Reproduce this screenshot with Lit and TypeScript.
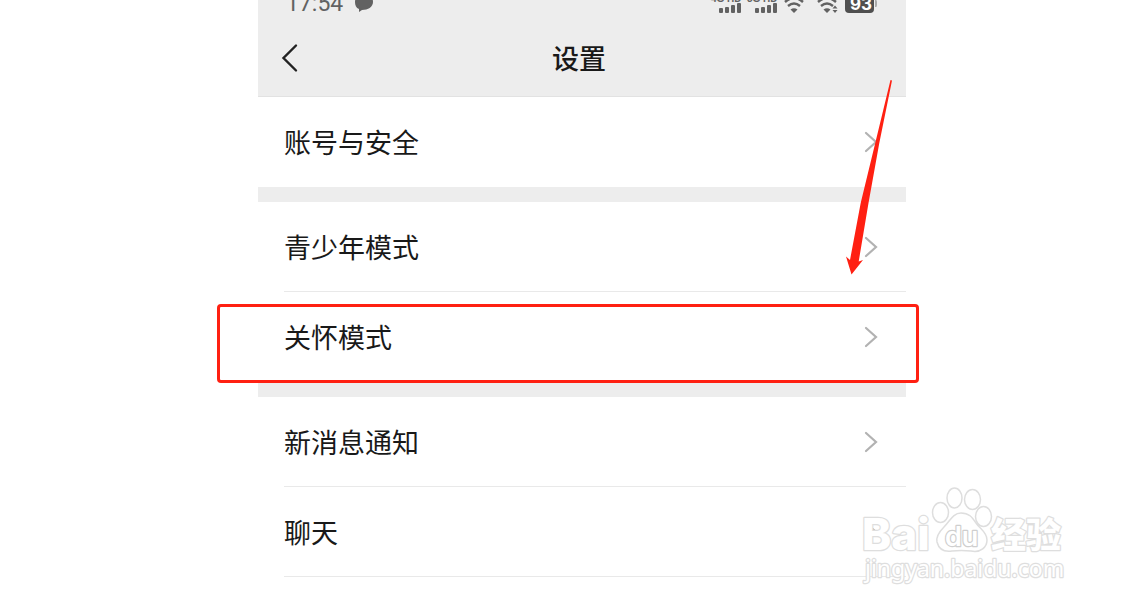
import { LitElement, html, css, svg, nothing } from "lit";
import { customElement, property } from "lit/decorators.js";

@customElement("status-bar")
class StatusBar extends LitElement {
  static styles = css`
    :host {
      display: flex;
      justify-content: space-between;
      height: 20px;
      padding: 0 28px;
      overflow: hidden;
      color: #626262;
    }
    .left {
      display: flex;
      gap: 12px;
    }
    .time {
      font: 23px/24px Roboto, "Noto Sans", sans-serif;
      margin-top: -8px;
    }
    svg {
      display: block;
      fill: currentColor;
    }
    .net {
      font: 700 10px "Liberation Sans", sans-serif;
    }
    .level {
      font: 700 17px Inter, sans-serif;
      fill: #fff;
    }
    .wave {
      fill: none;
      stroke: currentColor;
      stroke-width: 2.4;
    }
  `;

  private bars(x: number) {
    return svg`
      <rect x=${x} y="8" width="4" height="5" rx="1" />
      <rect x=${x + 6} y="7" width="4" height="6" rx="1" />
      <rect x=${x + 12} y="5" width="4" height="8" rx="1" />
      <rect x=${x + 18} y="3" width="4" height="10" rx="1" />`;
  }

  private wifi(x: number) {
    return svg`
      <g transform="translate(${x} 0)">
        <path class="wave" d="M-9 2Q0 -6 9 2M-6 6Q0 1 6 6" />
        <path d="M-3.500 9.500Q0 7 3.500 9.500L0 13z" />
      </g>`;
  }

  render() {
    return html`
      <div class="left">
        <span class="time">17:54</span>
        <svg width="20" height="14" viewBox="0 0 20 14" aria-hidden="true">
          <path d="M0 2C0-9 18-9 18 2C18 7 13 10 7 10L4 12V9C1 8 0 5 0 2z" />
        </svg>
      </div>
      <svg width="168" height="14" viewBox="0 0 168 14" role="img" aria-label="信号与电量">
        <text class="net" x="1" y="2">4G</text>
        <text class="net" x="17" y="2">HD</text>
        <text class="net" x="37" y="2">5G</text>
        <text class="net" x="53" y="2">HD</text>
        ${this.bars(9)} ${this.bars(45)} ${this.wifi(84)} ${this.wifi(117)}
        <path d="M122.500 8.500l2.500-3l2.500 3zM122.500 10h5l-2.500 3z" />
        <rect x="135" y="-8" width="29" height="21" rx="4" fill="#4f4f4f" />
        <path d="M165 0h1q1 0 1 2v3q0 2-1 2h-1z" fill="#aaa" />
        <text class="level" x="140" y="10">93</text>
      </svg>
    `;
  }
}

@customElement("setting-row")
class SettingRow extends LitElement {
  @property() label = "";
  @property({ type: Boolean }) divided = false;
  @property({ type: Boolean }) marked = false;

  static styles = css`
    :host {
      display: block;
      position: relative;
    }
    .row {
      display: flex;
      align-items: center;
      justify-content: space-between;
      box-sizing: border-box;
      min-height: 90px;
      margin-left: 26px;
      padding-right: 28px;
      border-bottom: 1px solid transparent;
      color: #191919;
      font-size: 27px;
      line-height: 40px;
      text-decoration: none;
    }
    .divided {
      border-bottom-color: #e9e9e9;
    }
    .chevron {
      display: block;
      fill: none;
      stroke: #b2b2b2;
      stroke-width: 2.2;
      stroke-linecap: round;
    }
    .frame {
      position: absolute;
      z-index: 1;
      inset: 12px -13px -1px -41px;
      border: 3px solid #ff2012;
      border-radius: 4px;
      pointer-events: none;
    }
  `;

  render() {
    return html`
      <a class="row ${this.divided ? "divided" : ""}" href="#">
        <span>${this.label}</span>
        <svg class="chevron" width="14" height="22" viewBox="0 0 14 22" aria-hidden="true">
          <path d="M2 2L12 11L2 20" />
        </svg>
      </a>
      ${this.marked ? html`<div class="frame"></div>` : nothing}
    `;
  }
}

@customElement("site-watermark")
class SiteWatermark extends LitElement {
  static styles = css`
    :host {
      display: block;
      pointer-events: none;
    }
    svg {
      display: block;
      fill: #fff;
      fill-opacity: 0.85;
      stroke: #dedede;
      stroke-width: 1.5;
      stroke-linejoin: round;
    }
    text {
      paint-order: stroke;
      stroke-width: 2.5;
      fill-opacity: 1;
    }
    .brand {
      font: 800 44px Inter, sans-serif;
    }
    .du {
      font: 600 27px Inter, sans-serif;
      stroke: #cfcfcf;
    }
    .cjk {
      font: 900 35px "Noto Sans CJK SC", sans-serif;
    }
    .site {
      font: 23px "Noto Sans", sans-serif;
    }
  `;

  render() {
    return html`
      <svg width="206" height="100" viewBox="0 0 206 100" role="img" aria-label="Baidu 经验">
        <text class="brand" x="0" y="64">Bai</text>
        <ellipse cx="78.500" cy="26.500" rx="8" ry="10" />
        <ellipse cx="92.500" cy="12" rx="7.500" ry="10" />
        <ellipse cx="110.500" cy="13.500" rx="8" ry="10" />
        <ellipse cx="121.500" cy="30.500" rx="8" ry="10" />
        <path d="M99 27C91 27 88 35 82 41C77 46 74 51 75 56C77 64 83 66 90 65Q99 64 109 65C119 67 125 61 125 54C125 46 118 43 114 37C110 31 107 27 99 27z" />
        <text class="du" x="83" y="60">du</text>
        <text class="cjk" x="129" y="62">经验</text>
        <text class="site" x="3" y="91">jingyan.baidu.com</text>
      </svg>
    `;
  }
}

@customElement("app-root")
class AppRoot extends LitElement {
  static styles = css`
    :host {
      display: grid;
      grid-template-columns: 258fr 648fr 220fr;
      position: relative;
      min-height: 100vh;
      overflow: hidden;
      background: #fff;
      font-family: "Noto Sans CJK SC", sans-serif;
    }
    .phone {
      grid-column: 2;
      position: relative;
      min-width: 0;
    }
    .header {
      background: #ededed;
      border-bottom: 1px solid #e2e2e2;
    }
    .bar {
      display: flex;
      align-items: center;
      height: 76px;
      padding: 0 28px 0 22px;
    }
    .back {
      display: block;
      width: 20px;
      height: 30px;
      padding: 0;
      border: 0;
      background: none;
      color: #222;
    }
    .back svg {
      display: block;
      fill: none;
      stroke: currentColor;
      stroke-width: 2.4;
      stroke-linecap: round;
    }
    .title {
      flex: 1;
      margin: 0;
      padding-right: 20px;
      color: #191919;
      font-size: 27px;
      font-weight: 500;
      line-height: 40px;
      text-align: center;
    }
    .group + .group {
      border-top: 15px solid #ededed;
    }
    .arrow {
      position: absolute;
      z-index: 2;
      top: 80px;
      right: 13px;
      fill: #ff2012;
      pointer-events: none;
    }
    .watermark {
      position: absolute;
      z-index: 3;
      top: 486px;
      right: 58px;
    }
  `;

  render() {
    return html`
      <main class="phone">
        <header class="header">
          <status-bar></status-bar>
          <div class="bar">
            <button class="back" type="button" aria-label="返回">
              <svg width="20" height="30" viewBox="0 0 20 30" aria-hidden="true">
                <path d="M16 2.500L3.500 15L16 27.500" />
              </svg>
            </button>
            <h1 class="title">设置</h1>
          </div>
        </header>
        <section class="group">
          <setting-row label="账号与安全"></setting-row>
        </section>
        <section class="group">
          <setting-row label="青少年模式" divided></setting-row>
          <setting-row label="关怀模式" marked></setting-row>
        </section>
        <section class="group">
          <setting-row label="新消息通知" divided></setting-row>
          <setting-row label="聊天" divided></setting-row>
        </section>
        <svg class="arrow" width="48" height="196" viewBox="0 0 48 196" aria-hidden="true">
          <path d="M45.500 0L47 0.500L34.300 63L23.500 123L13.700 181.500L18 180L6.500 194.500L1 176.500L5 180L15.700 123L30.500 62z" />
        </svg>
      </main>
      <site-watermark class="watermark"></site-watermark>
    `;
  }
}
